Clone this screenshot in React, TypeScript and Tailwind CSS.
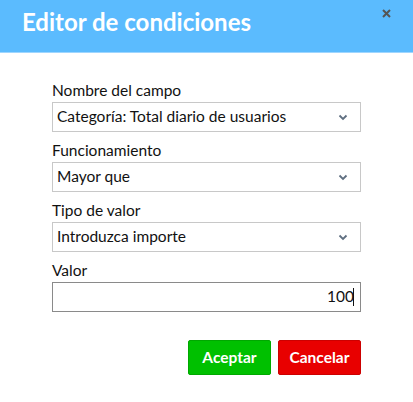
const font = { fontFamily: "Lato, 'Open Sans', sans-serif" };

function SelectBox({ value }: { value: string }) {
  return (
    <div className="flex h-[30px] items-center justify-between border border-[#c8c8c8] bg-white pl-[4px] pr-[12px]">
      <span className="text-[15.5px] leading-none text-[#111]">{value}</span>
      <svg width="10" height="7" viewBox="0 0 10 7" className="mt-[1px]">
        <path d="M1.5 1.5 L5 5 L8.5 1.5" fill="none" stroke="#5f6f80" strokeWidth="1.8" />
      </svg>
    </div>
  );
}

function Field({ label, children }: { label: string; children: React.ReactNode }) {
  return (
    <div className="flex flex-col">
      <label className="mb-[3px] text-[15.5px] leading-[18px] text-[#111]">{label}</label>
      {children}
    </div>
  );
}

export default function App() {
  return (
    <div className="h-[402px] w-[413px] bg-white" style={font}>
      <div className="relative h-[53px] border-b border-[#9fd6ff] bg-[#5bbbfe] pl-[22px] pt-[6px]">
        <h1 className="text-[24px] font-bold leading-[32px] text-white">Editor de condiciones</h1>
        <button className="absolute right-[22px] top-[9px]" aria-label="Cerrar">
          <svg width="9" height="9" viewBox="0 0 9 9">
            <path d="M1 1 L8 8 M8 1 L1 8" stroke="#555" strokeWidth="2" />
          </svg>
        </button>
      </div>

      <div className="flex flex-col gap-[9px] px-[52px] pt-[28px]">
        <Field label="Nombre del campo">
          <SelectBox value="Categoría: Total diario de usuarios" />
        </Field>
        <Field label="Funcionamiento">
          <SelectBox value="Mayor que" />
        </Field>
        <Field label="Tipo de valor">
          <SelectBox value="Introduzca importe" />
        </Field>
        <Field label="Valor">
          <div className="flex h-[30px] items-center justify-end border border-[#8a8a8a] bg-white pr-[6px]">
            <span className="text-[15.5px] leading-none text-[#111]">100</span>
            <span className="ml-[-1px] h-[18px] w-px bg-[#111]" />
          </div>
        </Field>

        <div className="mt-[19px] flex justify-end gap-[7px]">
          <button className="h-[35px] w-[83px] rounded-[2px] border border-[#00a800] bg-[#00c000] text-[15.5px] font-bold text-white">
            Aceptar
          </button>
          <button className="h-[35px] w-[83px] rounded-[2px] border border-[#cc0000] bg-[#e80000] text-[15.5px] font-bold text-white">
            Cancelar
          </button>
        </div>
      </div>
    </div>
  );
}
